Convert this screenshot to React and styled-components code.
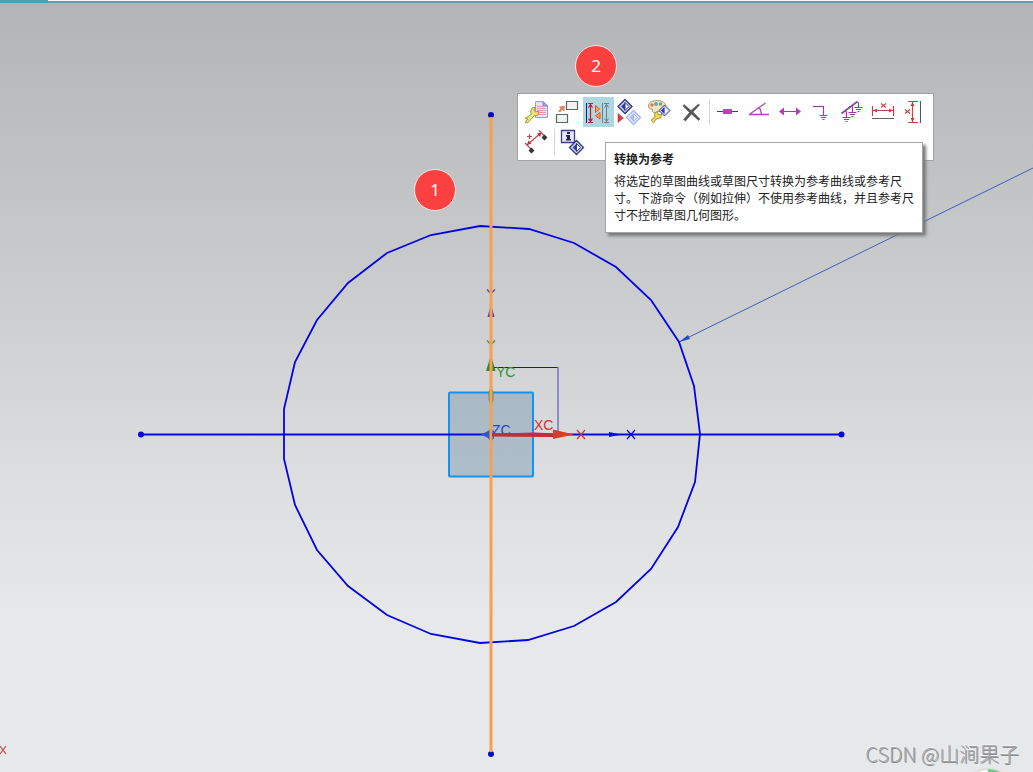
import React from "react";
import styled, { createGlobalStyle } from "styled-components";

const GlobalStyle = createGlobalStyle`
  * { box-sizing: border-box; }
  body {
    margin: 0;
    font-family: "Noto Sans CJK SC", "Noto Sans", sans-serif;
    font-size: 12px;
  }
`;

const Viewport = styled.main`
  position: relative;
  min-height: 100vh;
  overflow: hidden;
  background: linear-gradient(#b3b4b6 0%, #cacbcc 36%, #dddee0 62%, #e6e8ea 80%, #e6e8ea 100%);
`;

const LoadStrip = styled.div`
  position: relative;
  display: flex;
  height: 3px;
  background: linear-gradient(#f4fafb 1px, #5f9fb0 1px);
`;

const LoadDone = styled.div`
  width: 48px;
  background: #4f9dba;
`;

const Drawing = styled.svg`
  position: absolute;
  top: 0;
  left: 0;
  width: 100%;
  height: 100%;
  text {
    font-family: "Liberation Sans", Arial, sans-serif;
    font-size: ${(p) => p.$labelSize}px;
  }
`;

const Badge = styled.div`
  position: absolute;
  left: ${(p) => p.$x}px;
  top: ${(p) => p.$y}px;
  display: flex;
  align-items: center;
  justify-content: center;
  width: 42px;
  height: 42px;
  border: 1px solid #fbe3e3;
  border-radius: 50%;
  background: #fa4140;
  color: #fff;
  font-family: "Noto Sans", sans-serif;
  font-size: 17px;
  line-height: 24px;
`;

const ContextMenu = styled.div`
  position: absolute;
  left: 517px;
  top: 93px;
  padding: 3px 4px 3px 3px;
  border: 1px solid #a3a3a3;
  background: #fefefe;
`;

const ToolRow = styled.div`
  display: flex;
`;

const ToolButton = styled.button`
  display: block;
  width: 31px;
  height: 30px;
  padding: 0;
  border: 0;
  background: ${(p) => (p.$active ? "#b0d7e1" : "transparent")};
  svg { display: block; }
`;

const Separator = styled.span`
  width: 1px;
  height: 26px;
  margin: 2px;
  background: #d4d4d4;
`;

const Tooltip = styled.section`
  position: absolute;
  left: 605px;
  top: 142px;
  width: 318px;
  padding: 7px 8px 8px;
  border: 1px solid #a6a6a6;
  background: #fefefe;
  box-shadow: 3px 3px 3px #77787a;
  color: #222;
`;

const TooltipTitle = styled.h2`
  margin: 0 0 5px;
  font-size: 12px;
  line-height: 17px;
  font-weight: 700;
`;

const TooltipText = styled.p`
  margin: 0;
  line-height: 17px;
  padding-bottom: 1px;
`;

const Watermark = styled.div`
  position: absolute;
  right: 14px;
  bottom: 4px;
  color: #a4a5a7;
  font-size: 20px;
  font-weight: 300;
  line-height: 28px;
  text-shadow: 1px 1px 0 #8e8f91, -1px -1px 0 #f2f3f4;
`;

const Diamond = ({ x, y, light }) => (
  <g transform={`translate(${x} ${y})`} stroke={light ? "#a9b8e0" : "#35387f"}>
    <path d="M-7 0L0 -7L7 0L0 7Z" fill={light ? "#dce7fb" : "#c3cdf0"} strokeWidth="1.3" />
    <path d="M-3.8 0L0 -3.8V3.8Z" fill={light ? "#a8bdec" : "#2d36b5"} stroke="none" />
    <path d="M0 -4L4 0L0 4Z" fill={light ? "#dce7fb" : "#fff"} strokeWidth="1" />
  </g>
);

const Wrench = () => (
  <g>
    <path d="M4 25L6.5 26L13 19L17 18L18 14L14.5 15L13 13L14.5 10L11 11L9.5 15L10.5 17L4 21.5L7 22Z" fill="#f4df76" stroke="#aa963e" strokeWidth="1" />
    <path d="M7 22L12 17.5" stroke="#fff5b5" />
  </g>
);

const Ground = ({ x, y, stem = 6 }) => (
  <path d={`M${x} ${y - stem}V${y}M${x - 4} ${y}h8M${x - 2.5} ${y + 2}h5M${x - 1} ${y + 4}h2`} stroke="#9c3ca6" strokeWidth="1.2" fill="none" />
);

const icons = {
  edit: (
    <>
      <path d="M14.5 4.5H22L26.5 9V20.5H14.5Z" fill="#e3e3f7" stroke="#9a9bc8" />
      <path d="M22 4.5V9H26.5Z" fill="#9ba4e0" stroke="#8388c0" />
      <path d="M16 9.5h6M16 11.5h9M16 13.5h9M16 15.5h9M16 17.5h9" stroke="#e69aaa" />
      <Wrench />
    </>
  ),
  move: (
    <>
      <path d="M14.5 4.5h11v8h-11zM4.5 17.5h11v8h-11z" fill="#f0f4f0" stroke="#5e6965" strokeWidth="1.2" />
      <path d="M6.5 14L9 12L7.5 10L12.5 9L12 14L10.5 12.500L8 15Z" fill="#ec8351" stroke="#b96b4d" strokeWidth=".5" />
    </>
  ),
  reference: (
    <>
      <path d="M3.5 6v20" stroke="#1a1a80" />
      <path d="M5 6.5h5M5 25.5h5M7.5 7v18M5.5 10.5l2-3 2 3M5.5 21.5l2 3 2-3" fill="none" stroke="#b31f30" strokeWidth="1.2" />
      <path d="M12.5 8.5L16.5 12L12.5 15.5ZM17 15.5V22L12.5 18.8Z" fill="#ffae22" stroke="#e14c35" />
      <path d="M19.5 6v20M21 6.5h5M21 25.5h5M23.5 7v18M21.5 10.5l2-3 2 3M21.5 21.5l2 3 2-3" fill="none" stroke="#6e8085" />
    </>
  ),
  alternate: (
    <>
      <Diamond x={11} y={9.5} />
      <Diamond x={19.5} y={20.5} light />
      <path d="M4 16.5L9.5 21L4 25.5Z" fill="#d83d3d" stroke="#b54848" strokeWidth=".6" />
    </>
  ),
  display: (
    <>
      <path d="M3.5 9C3.5 5 8 3.5 12.5 3.5C17.5 3.5 21 6 20.5 10C20 13.5 17 15 13.5 14.5C11 14 11 17 8.5 15.5C6 14 9 12 6.5 12C4.5 12 3.5 11 3.5 9Z" fill="#f4e4bd" stroke="#9c947a" />
      <circle cx="7" cy="8" r="1.7" fill="#e4783d" />
      <circle cx="11" cy="7" r="2" fill="#58a8dc" />
      <circle cx="15.5" cy="7" r="1.7" fill="#62ad62" />
      <path d="M6 23L8.5 26L11 22L15.5 21L17 16.5L13.5 18L12 14.5L9.5 17L10 20Z" fill="#f5d953" stroke="#aa963e" />
      <path d="M14 13.5L19.5 8L25 13.5L19.5 19Z" fill="#c5d0f1" stroke="#35387f" />
      <path d="M16 13.5L19.5 10V17Z" fill="#2d36b5" />
      <path d="M20 10.5L23 13.5L20 16.5Z" fill="#fff" />
    </>
  ),
  remove: (
    <path d="M8 7.5L15 13.5L22.5 7L23.5 8L17 15L24 22L22.5 23.5L15.5 17L9.5 24L7.5 22.5L13.5 15.5L7 9Z" fill="#535453" stroke="#535453" strokeWidth=".5" />
  ),
  midpoint: (
    <>
      <path d="M5 14.5h21" stroke="#493b50" />
      <path d="M11 12h9v5h-9z" fill="#b844bd" />
    </>
  ),
  angle: <path d="M6 17.5h20M7 17L22.5 6M15 11L17 11.5L18.5 17" stroke="#ac4ab1" strokeWidth="1.3" fill="none" />,
  horizontal: (
    <>
      <path d="M8 14.5h16" stroke="#97409b" />
      <path d="M5 14.5L10 10.5V18.5ZM27 14.5L22 10.5V18.5Z" fill="#b43db8" />
    </>
  ),
  fix: (
    <>
      <path d="M8 9.5h11" stroke="#963f9b" strokeWidth="1.2" />
      <Ground x={18.5} y={18.5} stem={9} />
    </>
  ),
  fixAll: (
    <>
      <path d="M5.5 16.5L21.5 4.5" stroke="#79549a" strokeWidth="1.8" />
      <path d="M7 14.5h3.5M13 9.5h3.5M19 5.5h3.5" stroke="#9c3ca6" />
      <Ground x={10.5} y={20.5} />
      <Ground x={16.5} y={15.5} />
      <Ground x={22.5} y={10.5} stem={5} />
    </>
  ),
  width: (
    <>
      <path d="M5.5 9v10M26.5 9v10M6 13.5h20M14 6.5l5 4M19 6.5l-5 4" stroke="#bd4444" strokeWidth="1.2" />
      <path d="M6 13.5l4-2v4zM26 13.5l-4-2v4z" fill="#bd4444" />
      <path d="M5 21.5h22" stroke="#646064" />
    </>
  ),
  height: (
    <>
      <path d="M10 4.5h10M10 25.5h10M14.5 5v20M7 12.5l5 4M12 12.5l-5 4" stroke="#bd4444" strokeWidth="1.2" />
      <path d="M14.5 5l-2 4h4zM14.5 25l-2-4h4z" fill="#bd4444" />
      <path d="M22.5 4v22" stroke="#5b5558" />
    </>
  ),
  distance: (
    <>
      <path d="M8.5 7v5M6 9.5h5M6.5 17.5L20.5 5.5M18 3.5L23.5 9M4 16L10.5 22.5" stroke="#c74550" strokeWidth="1.2" />
      <path d="M6 18l1.5-4.5 3 3zM20.500 5.500l-4.500 1 3 3.500z" fill="#c02f3c" />
      <path d="M23.5 7.500l3 3-3 3-3-3zM10.500 20.500l3 3-3 3-3-3z" fill="#363638" />
    </>
  ),
  info: (
    <>
      <path d="M4.5 3.5h13v12h-13z" fill="#e4e9fb" stroke="#3d3f88" strokeWidth="1.3" />
      <path d="M10 5h3v2h-3zM9 8h4v4h1v1.5H9V12h1V9.5H9Z" fill="#20205c" />
      <Diamond x={19.5} y={20.5} />
    </>
  ),
};

const mainTools = [
  ["edit", "编辑参数"],
  ["move", "移动"],
  ["reference", "转换为参考"],
  ["alternate", "备选解"],
  ["display", "编辑显示"],
  ["remove", "删除"],
  null,
  ["midpoint", "中点"],
  ["angle", "角度"],
  ["horizontal", "水平"],
  ["fix", "固定"],
  ["fixAll", "完全固定"],
  ["width", "水平尺寸"],
  ["height", "竖直尺寸"],
];

const moreTools = [["distance", "距离尺寸"], null, ["info", "信息"]];

const Tools = ({ items }) => (
  <ToolRow>
    {items.map((item, i) =>
      item ? (
        <ToolButton key={item[0]} type="button" aria-label={item[1]} $active={item[0] === "reference"}>
          <svg width="31" height="30" fill="none" aria-hidden="true">{icons[item[0]]}</svg>
        </ToolButton>
      ) : (
        <Separator key={i} />
      )
    )}
  </ToolRow>
);

const Sketch = () => (
  <Drawing $labelSize={14} role="img" aria-label="草图">
    <path d="M679 342L1379 -2" stroke="#3f61b8" fill="none" />
    <path d="M679 342L688 335L690 339Z" fill="#244fc0" />
    <path d="M480 226L529 229L574 243L616 267L651 300L679 342L694 386L700 434L695 482L678 527L651 569L616 602L574 626L528 640L480 643L431 634L387 615L348 586L317 550L295 505L284 459V409L295 362L317 320L348 283L387 253L431 235Z" fill="none" stroke="#0404e2" strokeWidth="1.8" />
    <rect x="449" y="392.5" width="84" height="84" rx="1" fill="#6a8fab" fillOpacity=".4" stroke="#1492ee" strokeWidth="2" />
    <path d="M492 367.5H558" stroke="#1616a8" />
    <path d="M558 367V434" stroke="#7474c8" strokeWidth="1.5" />
    <path d="M141 434.5H841" stroke="#0808e0" strokeWidth="1.8" />
    <circle cx="141" cy="434.5" r="3" fill="#0808dc" />
    <circle cx="841.5" cy="434.5" r="3" fill="#0808dc" />
    <circle cx="491" cy="115" r="3" fill="#0808c8" />
    <circle cx="491" cy="754" r="3" fill="#0808c8" />
    <path d="M609 432L621 434.5L609 437Z" fill="#0808dc" />
    <path d="M487.5 317L491 304L494.5 317Z" fill="#6138a8" />
    <path d="M487 289.5L491 293.5L495 289.5" stroke="#6138a8" strokeWidth="1.3" fill="none" />
    <path d="M487 340.5L491 344.5L495 340.5" stroke="#508b32" strokeWidth="1.3" fill="none" />
    <path d="M486 371L491 355L495.5 371Z" fill="#3c8527" />
    <path d="M488.5 400V392L491 386L493.5 392V400L491 407Z" fill="#6c8b50" />
    <path d="M481 434.5L488 431L491 428L494 431V438L491 442L488 438Z" fill="#3159c5" />
    <text x="492" y="435" fill="#2347ca">ZC</text>
    <path d="M491 117V752" stroke="#f5a055" strokeWidth="3" />
    <path d="M492 433.5L535 432.5L555 433.5V437L492 436.5Z" fill="#c13035" />
    <path d="M553 429.5L574 434.5L553 439Z" fill="#e13731" />
    <text x="496" y="377" fill="#2f9534">YC</text>
    <text x="534" y="430" fill="#d42e2e">XC</text>
    <path d="M577 430L585 439M585 430L577 439" stroke="#cf3048" strokeWidth="1.2" />
    <path d="M627 430L635 439M635 430L627 439" stroke="#0b0bd5" strokeWidth="1.2" />
    <path d="M0 746L6 754M6 746L0 754" stroke="#cb4952" strokeWidth="1.2" />
    <circle cx="988" cy="794" r="25" fill="#fafafa" stroke="#dcdddd" strokeWidth="2" />
    <path d="M988 769A25 25 0 0 1 1013 794H988Z" fill="#65cf86" />
  </Drawing>
);

export default function App() {
  return (
    <>
      <GlobalStyle />
      <Viewport>
        <LoadStrip>
          <LoadDone />
        </LoadStrip>
        <Sketch />
        <Badge $x={414} $y={169}>1</Badge>
        <Badge $x={575} $y={45}>2</Badge>
        <ContextMenu role="toolbar" aria-label="快捷工具条">
          <Tools items={mainTools} />
          <Tools items={moreTools} />
        </ContextMenu>
        <Tooltip role="tooltip">
          <TooltipTitle>转换为参考</TooltipTitle>
          <TooltipText>
            将选定的草图曲线或草图尺寸转换为参考曲线或参考尺寸。下游命令（例如拉伸）不使用参考曲线，并且参考尺寸不控制草图几何图形。
          </TooltipText>
        </Tooltip>
        <Watermark>CSDN @山涧果子</Watermark>
      </Viewport>
    </>
  );
}
